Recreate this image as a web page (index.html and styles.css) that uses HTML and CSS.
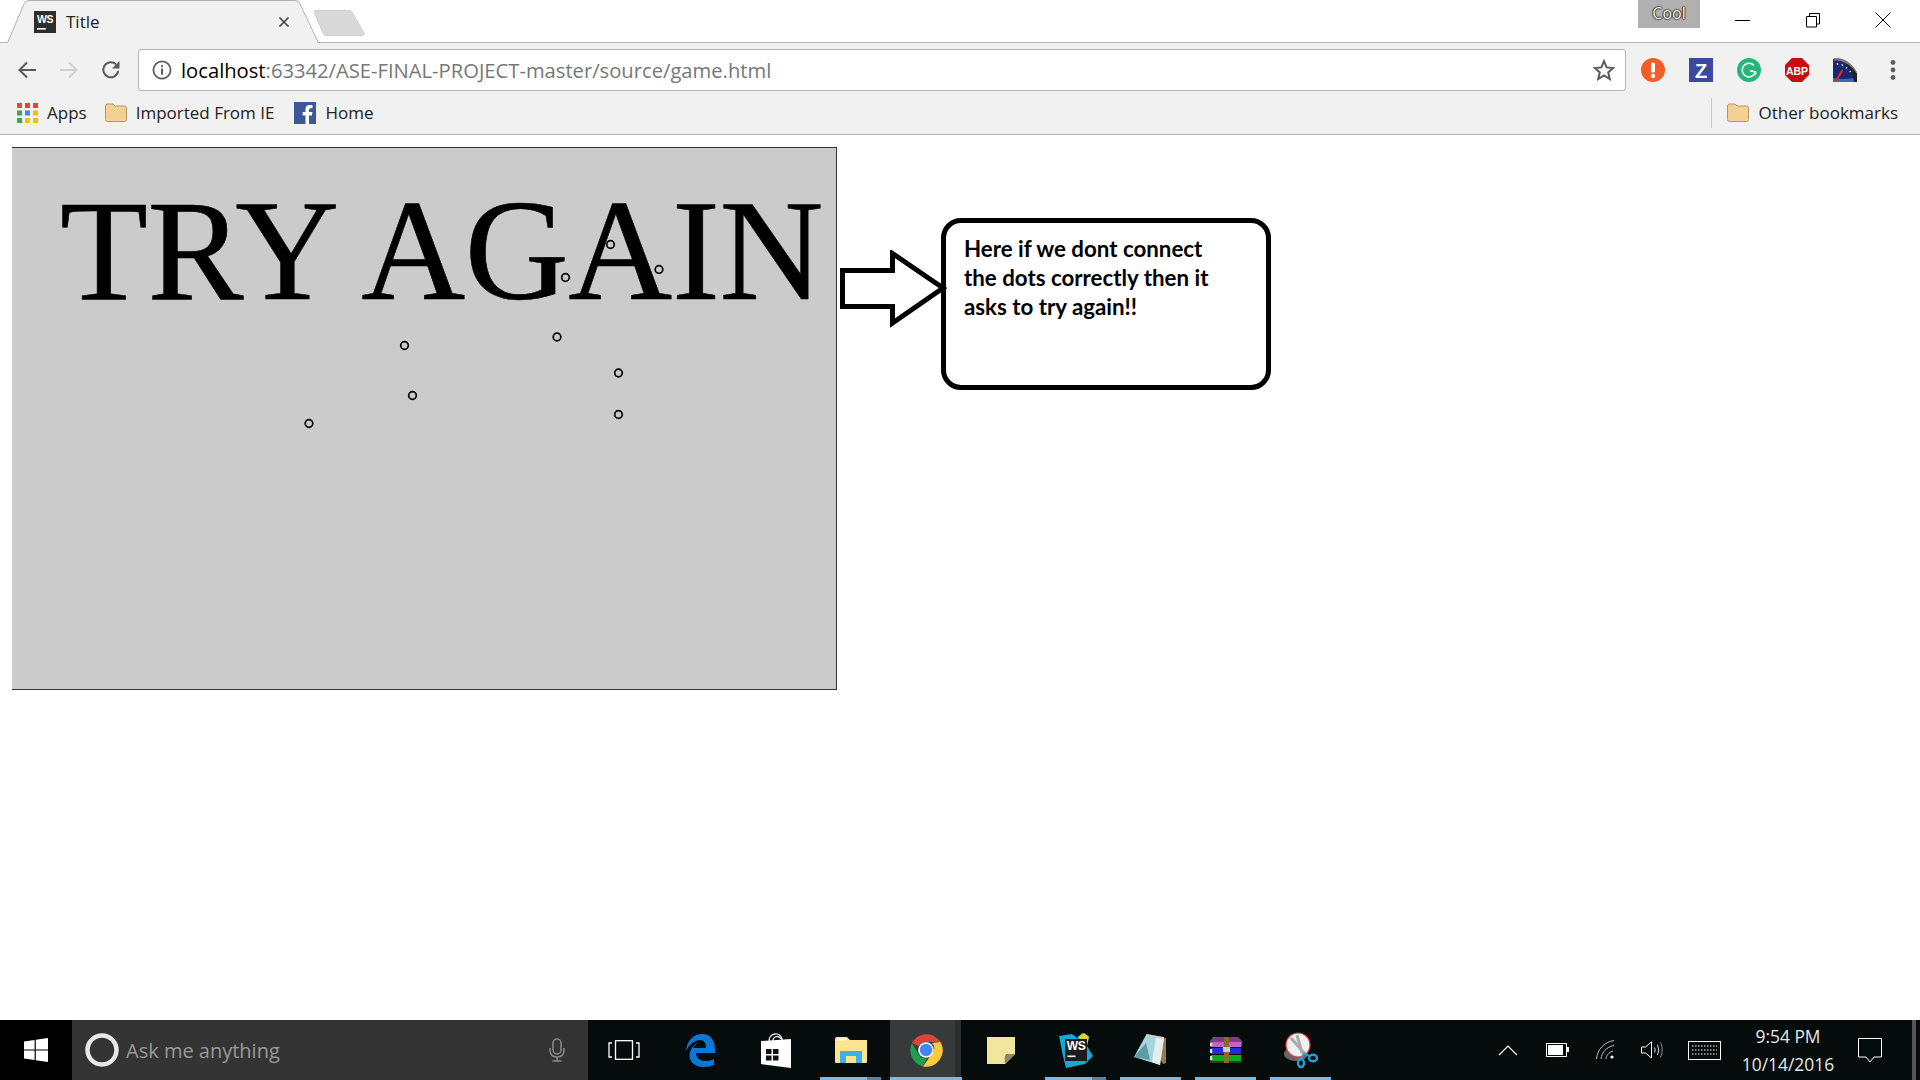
FILE: index.html
```html
<!DOCTYPE HTML>
<html lang="en">
  <head>
    <title>Title</title>
    <meta charset="utf-8">
    <link rel="stylesheet" href="styles.css">
  </head>
  <body>

  <div id="browser">
    <div class="titlebar">
      <div class="tab">
        <svg class="tab-shape" width="312" height="43" viewBox="0 0 312 43">
          <path d="M0.5 43 L17 4 Q18.5 0.5 22 0.5 L288 0.5 Q291.5 0.5 293 4 L311.5 43" fill="#f1f1f1" stroke="#b0b0b0"/>
        </svg>
        <svg class="tab-icon" width="22" height="22" viewBox="0 0 22 22">
          <rect width="22" height="22" fill="#2d2d2d"/>
          <text x="11" y="11.5" class="ws-text" font-size="10.5">WS</text>
          <rect x="3" y="17" width="9" height="1.6" fill="#fff"/>
        </svg>
        <span class="tab-title">Title</span>
        <svg class="tab-close" width="12" height="12" viewBox="0 0 12 12">
          <path d="M1.5 1.5 L10.5 10.5 M10.5 1.5 L1.5 10.5" stroke="#444" stroke-width="1.6"/>
        </svg>
      </div>
      <svg class="newtab" width="52" height="26" viewBox="0 0 52 26">
        <path d="M1 2 Q1 0.5 3 0.5 L36 0.5 Q38 0.5 39 2 L51 23 Q51.5 25.5 49 25.5 L13 25.5 Q11 25.5 10 23 Z" fill="#d8d8d8" stroke="#cfcfcf"/>
      </svg>
      <div class="titlebar-fill"></div>
      <div class="profile">Cool</div>
      <div class="winbtn">
        <svg width="16" height="16" viewBox="0 0 16 16"><path d="M0 8.5 H15" stroke="#000"/></svg>
      </div>
      <div class="winbtn">
        <svg width="16" height="16" viewBox="0 0 16 16"><path d="M1.5 4.5 H11.5 V15 H1.5 Z M4.5 4.5 V1.5 H14.5 V12 H11.5" fill="none" stroke="#000"/></svg>
      </div>
      <div class="winbtn">
        <svg width="16" height="16" viewBox="0 0 16 16"><path d="M0.5 0.5 L15.5 15.5 M15.5 0.5 L0.5 15.5" stroke="#000"/></svg>
      </div>
    </div>

    <div class="toolbar">
      <div class="navbtn">
        <svg width="20" height="20" viewBox="0 0 20 20"><path d="M19 10 H3 M10 2.5 L2.5 10 L10 17.5" fill="none" stroke="#5a5a5a" stroke-width="2"/></svg>
      </div>
      <div class="navbtn">
        <svg width="20" height="20" viewBox="0 0 20 20"><path d="M1 10 H17 M10 2.5 L17.5 10 L10 17.5" fill="none" stroke="#cfcfcf" stroke-width="2"/></svg>
      </div>
      <div class="navbtn">
        <svg width="20" height="20" viewBox="0 0 20 20"><path d="M17.2 11 A7.5 7.5 0 1 1 15 4.4" fill="none" stroke="#5a5a5a" stroke-width="2"/><path d="M18.5 1 V8.5 H11 Z" fill="#5a5a5a"/></svg>
      </div>
      <div class="omnibox">
        <svg class="info-icon" width="20" height="20" viewBox="0 0 20 20">
          <circle cx="10" cy="10" r="8.6" fill="none" stroke="#5a5a5a" stroke-width="1.7"/>
          <rect x="9" y="8.6" width="2" height="6" fill="#5a5a5a"/>
          <rect x="9" y="5.2" width="2" height="2" fill="#5a5a5a"/>
        </svg>
        <span class="url"><span class="host">localhost</span>:63342/ASE-FINAL-PROJECT-master/source/game.html</span>
        <svg class="star" width="22" height="22" viewBox="0 0 22 22">
          <path d="M11 2.2 L13.6 8.4 L20.3 9 L15.2 13.4 L16.8 20 L11 16.5 L5.2 20 L6.8 13.4 L1.7 9 L8.4 8.4 Z" fill="none" stroke="#5a5a5a" stroke-width="2"/>
        </svg>
      </div>
      <div class="extensions">
        <div class="ext">
          <svg width="24" height="24" viewBox="0 0 24 24">
            <circle cx="12" cy="12" r="12" fill="#f45d25"/>
            <rect x="10" y="4.5" width="4" height="10" rx="1.5" fill="#fff"/>
            <circle cx="12" cy="18" r="2.2" fill="#fff"/>
          </svg>
        </div>
        <div class="ext">
          <svg width="24" height="24" viewBox="0 0 24 24">
            <rect width="24" height="24" fill="#3b4a9c"/>
            <text x="12" y="19.5" class="ext-letter" font-size="20">Z</text>
          </svg>
        </div>
        <div class="ext">
          <svg width="24" height="24" viewBox="0 0 24 24">
            <circle cx="12" cy="12" r="12" fill="#25b679"/>
            <path d="M17 7.5 A6.8 6.8 0 1 0 18.5 14 L13 12.6 M18.8 13.6 L18.2 17" fill="none" stroke="#fff" stroke-width="1.6"/>
          </svg>
        </div>
        <div class="ext">
          <svg width="24" height="24" viewBox="0 0 24 24">
            <path d="M7 0 H17 L24 7 V17 L17 24 H7 L0 17 V7 Z" fill="#c70d0d"/>
            <text x="12" y="16.5" class="ext-letter" font-size="10.5">ABP</text>
          </svg>
        </div>
        <div class="ext">
          <svg width="24" height="24" viewBox="0 0 24 24">
            <path d="M0 1 Q14 -1 24 16 V24 H0 Z" fill="#1a2770"/>
            <path d="M1 1.5 Q14 0 23 15" fill="none" stroke="#777" stroke-width="2.5"/>
            <path d="M24 16 V24 H21 Q20 13 12 5 Q19 8 24 16 Z" fill="#222"/>
            <path d="M0 24 H21 Q21 22 20 20 Q10 22 0 20 Z" fill="#2d6ec0"/>
            <path d="M3 23 L9.5 12" stroke="#e22" stroke-width="2"/>
            <path d="M4 5 L5 7 M9 6 L9.5 8 M14 9 L13 10.5 M18 13 L16.5 14" stroke="#cdd" stroke-width="1.2"/>
          </svg>
        </div>
        <div class="ext">
          <svg width="8" height="24" viewBox="0 0 8 24" fill="#5f5f5f">
            <circle cx="4" cy="4.5" r="2.4"/><circle cx="4" cy="12" r="2.4"/><circle cx="4" cy="19.5" r="2.4"/>
          </svg>
        </div>
      </div>
    </div>

    <div class="bookmarks">
      <div class="bookmark apps">
        <svg width="21" height="20" viewBox="0 0 21 20">
          <rect x="0" y="0" width="5" height="5" fill="#ea4335"/><rect x="8" y="0" width="5" height="5" fill="#ea4335"/><rect x="16" y="0" width="5" height="5" fill="#ea4335"/>
          <rect x="0" y="7.5" width="5" height="5" fill="#34a853"/><rect x="8" y="7.5" width="5" height="5" fill="#4285f4"/><rect x="16" y="7.5" width="5" height="5" fill="#fbbc05"/>
          <rect x="0" y="15" width="5" height="5" fill="#34a853"/><rect x="8" y="15" width="5" height="5" fill="#fbbc05"/><rect x="16" y="15" width="5" height="5" fill="#fbbc05"/>
        </svg>
        <span>Apps</span>
      </div>
      <div class="bookmark imported">
        <svg class="folder" width="22" height="19" viewBox="0 0 22 19">
          <path d="M0.5 3 Q0.5 1 2.5 1 H8 L10 3 H19.5 Q21.5 3 21.5 5 V16.5 Q21.5 18.5 19.5 18.5 H2.5 Q0.5 18.5 0.5 16.5 Z" fill="#f3d094" stroke="#b9975c"/>
        </svg>
        <span>Imported From IE</span>
      </div>
      <div class="bookmark">
        <svg width="22" height="22" viewBox="0 0 22 22">
          <rect width="22" height="22" fill="#3b5998"/>
          <path d="M15 22 V13.5 H18 L18.4 10 H15 V8 Q15 6.3 16.8 6.3 H18.5 V3.2 Q17 3 15.6 3 Q11.5 3 11.5 7.4 V10 H8.7 V13.5 H11.5 V22 Z" fill="#fff"/>
        </svg>
        <span>Home</span>
      </div>
      <div class="bookmarks-fill"></div>
      <div class="bookmark other">
        <svg class="folder" width="22" height="19" viewBox="0 0 22 19">
          <path d="M0.5 3 Q0.5 1 2.5 1 H8 L10 3 H19.5 Q21.5 3 21.5 5 V16.5 Q21.5 18.5 19.5 18.5 H2.5 Q0.5 18.5 0.5 16.5 Z" fill="#f3d094" stroke="#b9975c"/>
        </svg>
        <span>Other bookmarks</span>
      </div>
    </div>
  </div>

  <div id="page">
    <div id="game">
      <div id="result">TRY AGAIN</div>
      <svg class="dots" width="824" height="541" viewBox="0 0 824 541" fill="none" stroke="#000" stroke-width="1.7">
        <circle cx="598.5" cy="96.5" r="3.8"/>
        <circle cx="647" cy="121.5" r="3.8"/>
        <circle cx="553.5" cy="129.5" r="3.8"/>
        <circle cx="545" cy="189" r="3.8"/>
        <circle cx="392.5" cy="197.5" r="3.8"/>
        <circle cx="606.5" cy="225" r="3.8"/>
        <circle cx="400.5" cy="247.5" r="3.8"/>
        <circle cx="606.5" cy="266.5" r="3.8"/>
        <circle cx="297" cy="275.5" r="3.8"/>
      </svg>
    </div>
    <svg class="arrow" width="108" height="80" viewBox="0 0 108 80">
      <path d="M2.5 20.5 H52.5 V3.5 L103 38 L52.5 73 V56.5 H2.5 Z" fill="#fff" stroke="#000" stroke-width="5"/>
    </svg>
    <div class="note">Here if we dont connect the dots correctly then it asks to try again!!</div>
  </div>

  <div id="taskbar">
    <div class="start">
      <svg width="24" height="24" viewBox="0 0 24 24" fill="#fff">
        <path d="M0 3.4 L10.6 2 V11.4 H0 Z M11.8 1.8 L24 0 V11.4 H11.8 Z M0 12.6 H10.6 V22 L0 20.6 Z M11.8 12.6 H24 V24 L11.8 22.2 Z"/>
      </svg>
    </div>
    <div class="search">
      <svg class="cortana" width="34" height="34" viewBox="0 0 34 34">
        <circle cx="17" cy="17" r="14.5" fill="none" stroke="#e8e8e8" stroke-width="4.5"/>
      </svg>
      <span class="ask">Ask me anything</span>
      <svg class="mic" width="18" height="24" viewBox="0 0 18 24" fill="none" stroke="#8a8a8a" stroke-width="1.5">
        <rect x="5" y="1" width="8" height="15" rx="4"/>
        <path d="M2 10 V12 Q2 19 9 19 Q16 19 16 12 V10 M9 19 V23 M4.5 23 H13.5"/>
      </svg>
    </div>
    <div class="taskbtn taskview">
      <svg width="32" height="20" viewBox="0 0 32 20" fill="none" stroke="#fff" stroke-width="1.3">
        <rect x="7.5" y="0.7" width="17" height="18.6"/>
        <path d="M4 3 H1 V17 H4 M28 3 H31 V17 H28"/>
      </svg>
    </div>
    <div class="taskbtn">
      <svg width="32" height="34" viewBox="0 0 32 34">
        <path d="M1 18 C2 7 9 1 17 1 C26 1 31 8 30 20 H11 C11 25 15 28 20 28 C24 28 27 27 29 26 V32 C26 33 23 34 19 34 C8 34 3 27 5 19 C7 13 11 10 15 9 C12 10 9 13 8 15 L21 15 C21 10 19 7 15 7 C9 7 4 12 1 18 Z" fill="#0b78d7"/>
      </svg>
    </div>
    <div class="taskbtn">
      <svg width="32" height="36" viewBox="0 0 32 36">
        <path d="M9 9 C9 1 20 -1 22 7 V11 M13 9 C13 4 19 3 21 7" fill="none" stroke="#ddd" stroke-width="1.5"/>
        <path d="M1 9 L31 7 V36 L23 35 L1 32 Z" fill="#fff"/>
        <path d="M6 17 H11.5 V22 H6 Z M13 17 H18.5 V22 H13 Z M6 23.5 H11.5 V28.5 H6 Z M13 23.5 H18.5 V28.5 H13 Z" fill="#111"/>
      </svg>
    </div>
    <div class="taskbtn open stacked">
      <svg width="32" height="26" viewBox="0 0 32 26">
        <path d="M0 2 Q0 0 2 0 H12 L15 3 H32 V25 Q32 26 31 26 H1 Q0 26 0 25 Z" fill="#fde58f"/>
        <rect x="2" y="1.5" width="9" height="2" fill="#fff"/>
        <path d="M5 26 V14 H27 V26 H21 V19 H11 V26 Z" fill="#3fb0e5"/>
      </svg>
    </div>
    <div class="taskbtn open active">
      <svg width="34" height="34" viewBox="0 0 34 34">
        <path d="M3 10 A16.5 16.5 0 0 1 31.5 9 L17 9 A8 8 0 0 0 10 13 Z" fill="#db4437"/>
        <path d="M3 10 L10 22 A8 8 0 0 0 18 25 L14 33.4 A16.5 16.5 0 0 1 3 10 Z" fill="#1e9e4e"/>
        <path d="M31.5 9 A16.5 16.5 0 0 1 14 33.4 L22 22 A8 8 0 0 0 23 10 Z" fill="#fccb3e"/>
        <circle cx="17" cy="17" r="7.8" fill="#fff"/>
        <circle cx="17" cy="17" r="6.2" fill="#4285f4"/>
      </svg>
    </div>
    <div class="taskbtn">
      <svg width="28" height="28" viewBox="0 0 28 28">
        <path d="M0 1 H28 V18 L18 28 H0 Z" fill="#f2e69c"/>
        <path d="M18 28 Q17 20 19 18 H28 Z" fill="#8a8668"/>
      </svg>
    </div>
    <div class="taskbtn open stacked">
      <svg width="36" height="36" viewBox="0 0 36 36">
        <path d="M1 4 L14 2 L19 6 L24 1 L31 4 L29 14 L35 24 L27 32 L8 36 L5 24 Z" fill="#16a9d3"/>
        <path d="M20 5 L26 1 L31 5 L29 13 Z" fill="#e0d13a"/>
        <rect x="7" y="7" width="22" height="22" fill="#1c1c1c"/>
        <text x="18" y="18" class="ws-text" font-size="12">WS</text>
        <rect x="9.5" y="23.5" width="8" height="1.6" fill="#fff"/>
      </svg>
    </div>
    <div class="taskbtn open">
      <svg width="34" height="34" viewBox="0 0 34 34">
        <path d="M13 1 L32 5 V30 L29 31 Z" fill="#9a7a3a"/>
        <path d="M12 2 L30 5 L26 32 L0 24 Z" fill="#a6d3dc"/>
        <path d="M22 4 L30 5 L26 32 L18 29 Z" fill="#e4eef0"/>
        <path d="M0 24 L12 10 L16 27 Z" fill="#5b9aa6"/>
        <path d="M12 1 L30 4 L30 6 L12 3 Z" fill="#ccc"/>
      </svg>
    </div>
    <div class="taskbtn open">
      <svg width="32" height="26" viewBox="0 0 32 26">
        <path d="M3 0 H28 L32 4 V9 H0 V4 Z" fill="#7d3c7d"/>
        <rect x="1" y="5" width="30" height="5" fill="#c95fc9"/>
        <rect x="1" y="11" width="30" height="6" fill="#1f2ed6"/>
        <rect x="1" y="18" width="30" height="6" fill="#12a51e"/>
        <rect x="0" y="24" width="32" height="2" fill="#333"/>
        <path d="M1 6 V9 M1 12 V16 M1 19 V23" stroke="#ddd" stroke-width="2.5"/>
        <rect x="14" y="0" width="5" height="26" fill="#8a6a2a"/>
        <rect x="13" y="10" width="7" height="5" fill="#ccc"/>
      </svg>
    </div>
    <div class="taskbtn open">
      <svg width="34" height="36" viewBox="0 0 34 36">
        <ellipse cx="12" cy="22" rx="12" ry="7" fill="#666"/>
        <circle cx="14" cy="13" r="12" fill="#f0f0f0" stroke="#e03a3a" stroke-width="1.2"/>
        <path d="M7 6 L21 22 M13 3 L18 21" stroke="#aaa" stroke-width="3"/>
        <path d="M20 21 L17 27 M20 21 L25 24" stroke="#2a9fd0" stroke-width="2"/>
        <ellipse cx="17" cy="31" rx="3" ry="4" fill="none" stroke="#2a9fd0" stroke-width="2.4"/>
        <ellipse cx="29" cy="26" rx="4" ry="3.2" fill="none" stroke="#2a9fd0" stroke-width="2.4"/>
      </svg>
    </div>
    <div class="taskbar-fill"></div>
    <div class="tray">
      <svg class="tray-chevron" width="20" height="11" viewBox="0 0 20 11"><path d="M1 10 L10 1 L19 10" fill="none" stroke="#fff" stroke-width="1.2"/></svg>
      <svg class="tray-battery" width="24" height="14" viewBox="0 0 24 14">
        <rect x="0.5" y="0.5" width="20" height="13" fill="none" stroke="#fff"/>
        <rect x="2" y="2" width="15" height="10" fill="#fff"/>
        <rect x="21" y="4" width="2" height="5" fill="#fff"/>
      </svg>
      <svg class="tray-wifi" width="20" height="20" viewBox="0 0 20 20" fill="none" stroke="#bbb" stroke-width="1">
        <path d="M0.5 19 C1 10 8 2 18 0.5 M5 19 C5.5 13 10 7 18 5.5 M10 19 C10 16 13 12 17 11"/>
        <circle cx="16" cy="17" r="1.6" fill="#fff" stroke="none"/>
      </svg>
      <svg class="tray-sound" width="24" height="18" viewBox="0 0 24 18" fill="none" stroke="#fff" stroke-width="1">
        <path d="M0.5 6 H4.5 L10.5 0.8 V17 L4.5 12 H0.5 Z"/>
        <path d="M13.5 6.5 Q15 9 13.5 11.5 M16.5 4 Q19 9 16.5 14" stroke="#ddd"/>
        <path d="M19.5 1.5 Q23 9 19.5 16.5" stroke="#888"/>
      </svg>
      <svg class="tray-keys" width="33" height="19" viewBox="0 0 33 19" fill="none" stroke="#fff" stroke-width="1">
        <rect x="0.5" y="0.5" width="32" height="18"/>
        <path d="M4 5 H29 M4 9 H29 M4 13 H29" stroke-dasharray="1.5 1.5"/>
      </svg>
      <div class="clock">
        <span>9:54 PM</span>
        <span>10/14/2016</span>
      </div>
      <svg class="tray-notify" width="24" height="25" viewBox="0 0 24 25">
        <path d="M0.5 0.5 H23.5 V19 H16 L12 24 L8 19 H0.5 Z" fill="none" stroke="#fff" stroke-width="1"/>
      </svg>
      <div class="show-desktop"></div>
    </div>
  </div>

  </body>
</html>
```

FILE: styles.css
```css
html {
  height: 100%;
}
body {
  margin: 0;
  padding: 0;
  height: 100vh;
  overflow: hidden;
  background: #ffffff;
  color: #000000;
  font-family: "Open Sans", sans-serif;
  display: flex;
  flex-direction: column;
}

/* browser chrome */

.titlebar {
  height: 42px;
  display: flex;
  align-items: flex-start;
  padding-right: 2px;
  background: #ffffff;
  border-bottom: 1px solid #b4b4b4;
}
.tab {
  position: relative;
  width: 312px;
  height: 43px;
  margin-left: 7px;
  display: flex;
  align-items: center;
  font-size: 17px;
}
.tab-shape {
  position: absolute;
  left: 0;
  top: 0;
}
.tab-icon {
  position: relative;
  margin-left: 27px;
  flex: none;
}
.tab-title {
  position: relative;
  margin-left: 10px;
  flex: 1;
  color: #222;
}
.tab-close {
  position: relative;
  margin-right: 29px;
}
.ws-text {
  fill: #fff;
  font-family: "Liberation Sans", sans-serif;
  font-weight: 700;
  text-anchor: middle;
  letter-spacing: -0.5px;
}
.newtab {
  margin: 10px 0 0 -6px;
}
.titlebar-fill {
  flex: 1;
}
.profile {
  width: 62px;
  height: 28px;
  margin-right: 8px;
  background: #b0b0b0;
  color: #fff;
  font-size: 16px;
  line-height: 26px;
  text-align: center;
  text-shadow: 0 0 1px #111, 0 0 1px #111, 0 0 1.5px #111, 0 0 1.5px #111;
}
.winbtn {
  width: 70px;
  height: 40px;
  display: flex;
  align-items: center;
  justify-content: center;
}

.toolbar {
  height: 42px;
  padding: 6px 0 0 6px;
  background: #f1f1f1;
  display: flex;
  align-items: center;
}
.navbtn {
  width: 42px;
  display: flex;
  justify-content: center;
}
.omnibox {
  width: 1488px;
  height: 42px;
  margin: 0 0 0 6px;
  box-sizing: border-box;
  background: #fff;
  border: 1px solid #b4b4b4;
  border-radius: 3px;
  display: flex;
  align-items: center;
  padding: 0 10px 0 13px;
}
.url {
  flex: 1;
  margin-left: 9px;
  font-size: 20.2px;
  color: #777;
  white-space: nowrap;
}
.host {
  color: #000;
}
.extensions {
  display: flex;
  margin-left: 3px;
}
.ext {
  width: 48px;
  height: 24px;
  display: flex;
  justify-content: center;
}
.ext-letter {
  fill: #fff;
  font-family: "Liberation Sans", sans-serif;
  font-weight: 700;
  text-anchor: middle;
}

.bookmarks {
  height: 43px;
  background: #f1f1f1;
  border-bottom: 1px solid #b4b4b4;
  display: flex;
  align-items: center;
  padding-left: 17px;
  font-size: 17px;
  color: #222;
}
.bookmark {
  display: flex;
  align-items: center;
  gap: 9px;
}
.apps {
  margin-right: 18px;
}
.imported {
  margin-right: 20px;
}
.bookmarks-fill {
  flex: 1;
}
.other {
  height: 30px;
  padding-left: 15px;
  padding-right: 22px;
  border-left: 1px solid #c8c8c8;
}

/* page content */

#page {
  flex: 1;
  display: flex;
  align-items: flex-start;
  padding: 12px 0 0 12px;
}
#game {
  position: relative;
  width: 824px;
  height: 541px;
  background: #cbcbcb;
  border-top: 1px solid #333;
  border-right: 1px solid #333;
  border-bottom: 1px solid #333;
  overflow: hidden;
}
#result {
  font-family: "Liberation Serif", serif;
  font-size: 144px;
  line-height: 160px;
  letter-spacing: -0.4px;
  -webkit-text-stroke: 0.6px #000;
  padding: 0 0 0 48px;
  margin-top: 23px;
  white-space: nowrap;
}
.dots {
  position: absolute;
  left: 0;
  top: 0;
}
.arrow {
  flex: none;
  margin: 103px 0 0 3px;
  position: relative;
}
.note {
  width: 330px;
  height: 172px;
  box-sizing: border-box;
  margin: 71px 0 0 -7px;
  padding: 11px 50px 0 18px;
  border: 5px solid #000;
  border-radius: 20px;
  font-family: Lato, sans-serif;
  font-weight: 700;
  font-size: 22.3px;
  line-height: 29px;
}

/* windows taskbar */

#taskbar {
  height: 60px;
  flex: none;
  display: flex;
  background: #060b0b;
  color: #fff;
}
.start {
  width: 72px;
  background: #000;
  display: flex;
  align-items: center;
  justify-content: center;
}
.search {
  width: 516px;
  background: #343434;
  display: flex;
  align-items: center;
  padding: 0 22px 0 13px;
  box-sizing: border-box;
}
.ask {
  flex: 1;
  margin-left: 7px;
  font-size: 20px;
  color: #999;
}
.taskbtn {
  position: relative;
  width: 75px;
  display: flex;
  align-items: center;
  justify-content: center;
}
.taskview svg {
  margin-right: 4px;
}
.taskbtn.open::after {
  content: "";
  position: absolute;
  left: 7px;
  right: 7px;
  bottom: 0;
  height: 3px;
  background: #76b9ed;
}
/* several windows open: darker end on the underline */
.taskbtn.stacked::after {
  background: linear-gradient(to right, #76b9ed 47px, #4f87b0 47px);
}
.taskbtn.active {
  background: linear-gradient(to right, transparent 1.5px, #363a3a 1.5px, #363a3a 67.5px, #2a2e2e 67.5px, #2a2e2e 73.5px, transparent 73.5px);
}
.taskbtn.active::after {
  left: 1.5px;
  right: 1.5px;
}
.taskbar-fill {
  flex: 1;
}
.tray {
  display: flex;
  align-items: center;
}
.tray-chevron {
  margin-right: 28px;
}
.tray-battery {
  margin-right: 26px;
}
.tray-wifi {
  margin-right: 25px;
}
.tray-sound {
  margin-right: 23px;
}
.tray-keys {
  margin-right: 17px;
}
.clock {
  width: 100px;
  display: flex;
  flex-direction: column;
  align-items: center;
  font-size: 17.4px;
  line-height: 28px;
  color: #e8e8e8;
}
.tray-notify {
  margin: 0 30px 0 20px;
}
.show-desktop {
  width: 4px;
  height: 60px;
  margin-right: 4px;
  background: #555;
}
```
